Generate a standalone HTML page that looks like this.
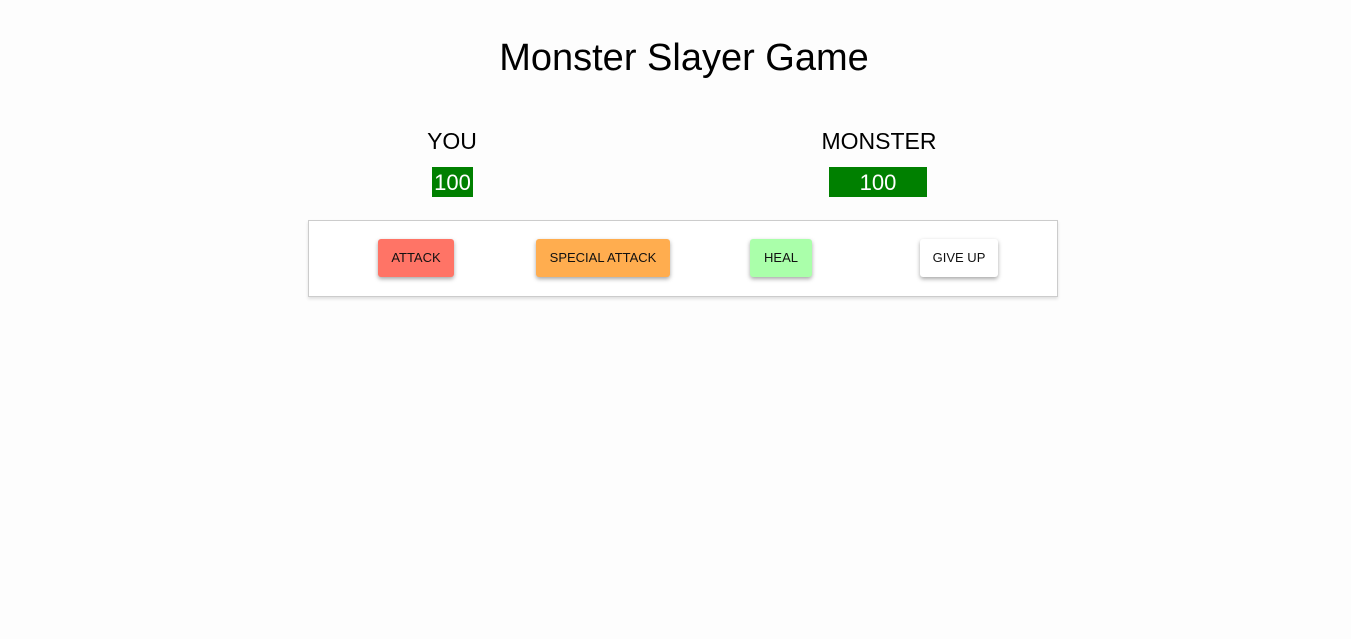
<!DOCTYPE html>
<html><head><style>
body{margin:0;background:#fdfdfd;width:1351px;height:639px;position:relative;font-family:"Liberation Sans",sans-serif;}
.t{position:absolute;font-family:"Comic Sans MS","Liberation Sans",sans-serif;color:#000;white-space:nowrap}
.hp{position:absolute;background:#008000;color:#fff;font-size:22px;text-align:center;line-height:32px;height:30px;top:167px}
.box{position:absolute;left:308px;top:220px;width:748px;height:75px;border:1px solid #ccc;box-shadow:0 2px 3px rgba(0,0,0,.12);background:#fff}
.b{position:absolute;top:239px;height:38px;line-height:38px;font-size:13px;text-align:center;border-radius:3px;box-shadow:0 2px 4px rgba(0,0,0,.35);color:#111}
</style></head><body>
<div class="t" style="left:496px;top:37px;font-size:38px;width:376px;text-align:center">Monster Slayer Game</div>
<div class="t" style="left:402px;top:128px;font-size:23px;width:100px;text-align:center">YOU</div>
<div class="t" style="left:800px;top:128px;font-size:23px;width:158px;text-align:center">MONSTER</div>
<div class="hp" style="left:432px;width:41px">100</div>
<div class="hp" style="left:829px;width:98px">100</div>
<div class="box"></div>
<div class="b" style="left:378px;width:76px;background:#ff7466">ATTACK</div>
<div class="b" style="left:536px;width:134px;background:#ffad4f">SPECIAL ATTACK</div>
<div class="b" style="left:750px;width:62px;background:#aaffaa">HEAL</div>
<div class="b" style="left:920px;width:78px;background:#fff">GIVE UP</div>
</body></html>
